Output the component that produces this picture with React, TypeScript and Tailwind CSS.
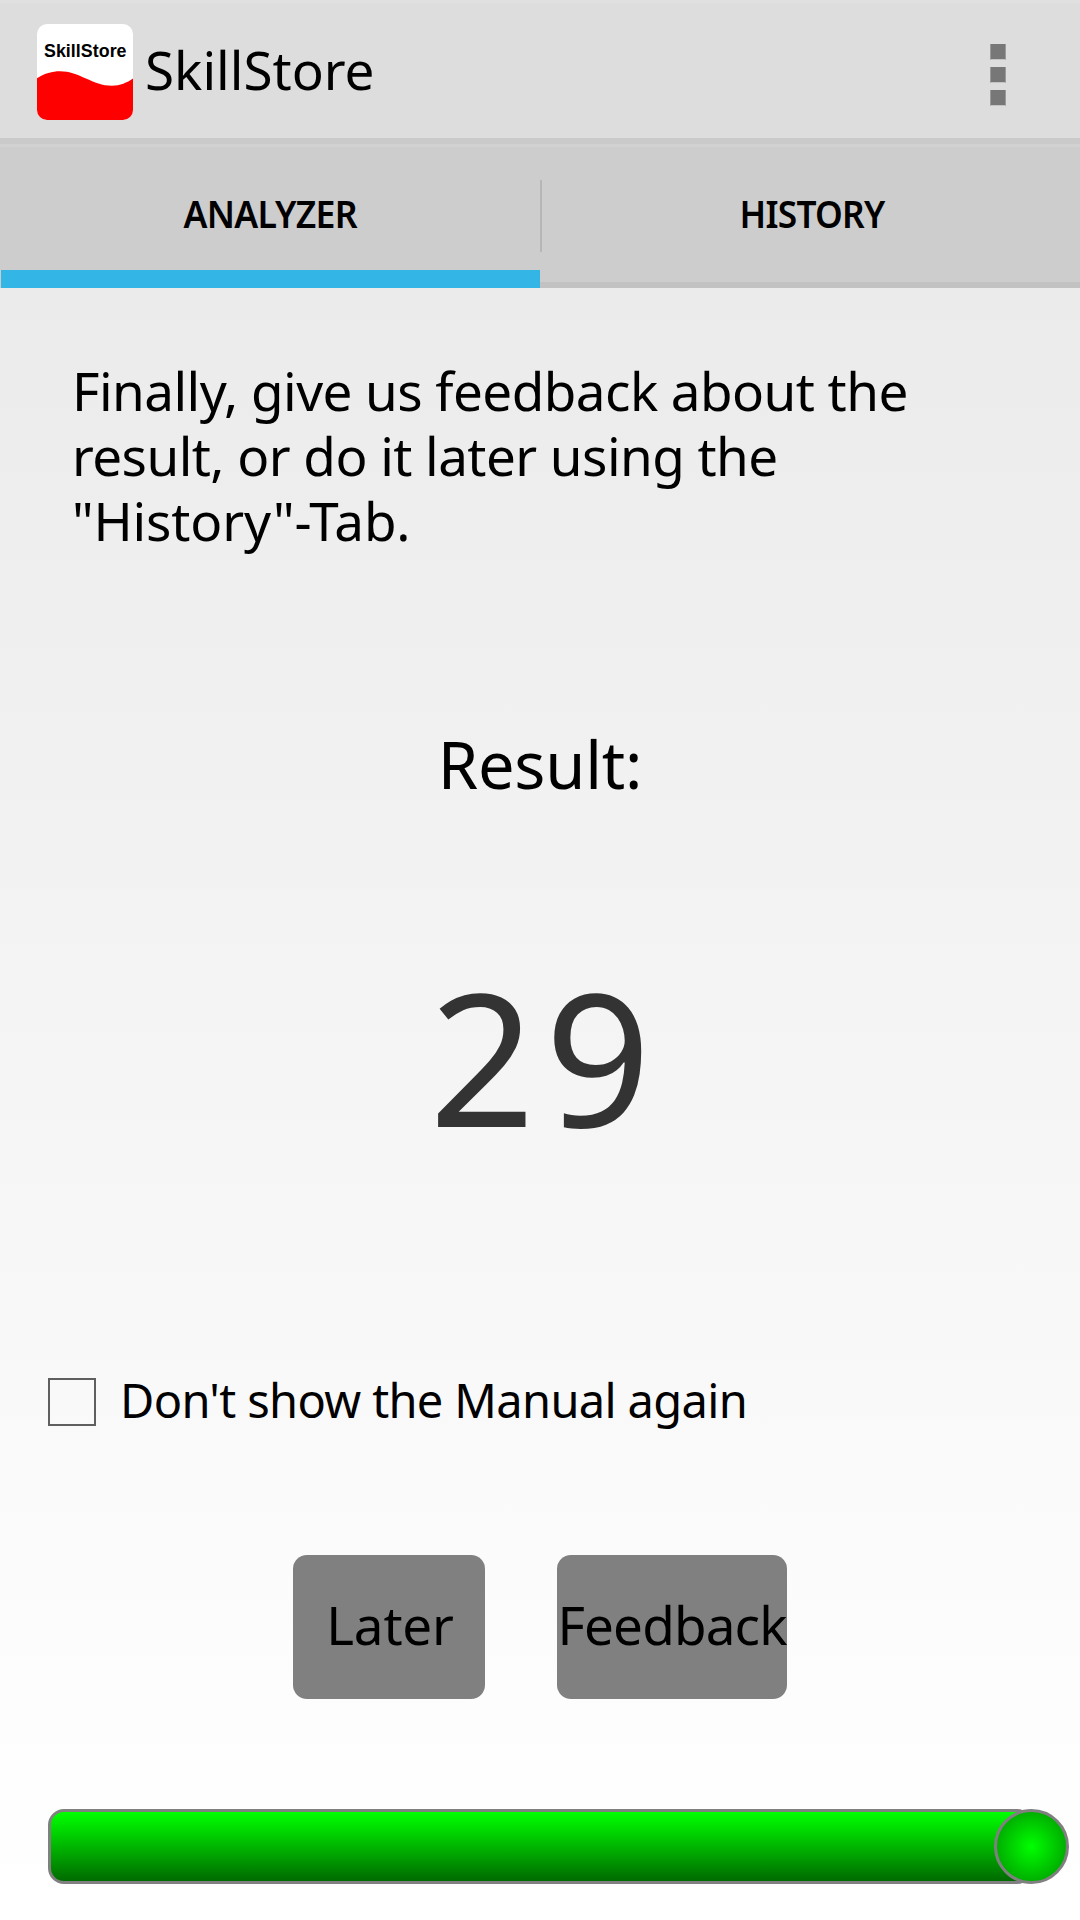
import React from "react";

function AppIcon() {
  return (
    <svg className="h-24 w-24 shrink-0" viewBox="0 0 96 96" aria-hidden="true">
      <defs>
        <clipPath id="icon-shape">
          <rect width="96" height="96" rx="10" />
        </clipPath>
      </defs>
      <g clipPath="url(#icon-shape)">
        <rect width="96" height="96" fill="#fff" />
        <path
          d="M0 54.3C8 49.3 15 47.3 23 47.3C42 47.3 56 61.8 75 61.8C83 61.8 90 58.8 96 54.6V96H0Z"
          fill="#f00"
        />
      </g>
      <text
        x="7"
        y="33"
        fontFamily="Liberation Sans, Arial, sans-serif"
        fontWeight="700"
        fontSize="17.8"
        textLength="82.5"
      >
        SkillStore
      </text>
    </svg>
  );
}

function Header() {
  return (
    <header className="flex h-[138px] items-center border-t-[3px] border-[#e0e0e0] bg-[#dddddd] pr-[74px] pl-[37px]">
      <div className="flex flex-1 items-center gap-3 pt-[3px]">
        <AppIcon />
        <h1 className="pb-[5px] text-[53px] leading-[72px]">SkillStore</h1>
      </div>
      <button className="flex flex-col gap-[7px] pt-[8px]" aria-label="Menu">
        {[0, 1, 2].map((i) => (
          <span
            key={i}
            className="block h-4 w-4 border-x border-b border-x-[#9a9a9a] border-b-[#c4c4c4] bg-[#777777]"
          />
        ))}
      </button>
    </header>
  );
}

function Tabs() {
  return (
    <nav className="flex h-[150px] flex-col bg-[#cdcdcd] text-[37.5px] font-semibold">
      <div className="h-[6px] bg-[#cacaca]" />
      <div className="h-[3px] bg-[#d2d2d2]" />
      <div className="flex flex-1">
        <div className="flex w-[540px] flex-col pl-px">
          <span className="flex flex-1 items-center justify-center pt-[11px]">
            <span className="scale-x-[0.95] leading-10 tracking-[-0.8px]">ANALYZER</span>
          </span>
          <span className="h-[18px] bg-[#33b5e5]" />
        </div>
        <div className="flex flex-1 flex-col border-b-[6px] border-[#c2c2c2]">
          <div className="flex flex-1 pt-[33px]">
            <span className="h-[72px] w-[2px] bg-[#b6b6b6]" />
            <span className="flex h-[67px] flex-1 items-center justify-center pl-[2px]">
              <span className="scale-x-[0.94] leading-10 tracking-[-0.8px]">HISTORY</span>
            </span>
          </div>
        </div>
      </div>
    </nav>
  );
}

export default function App() {
  return (
    <div className="flex h-[1920px] w-[1080px] flex-col overflow-hidden font-['Noto_Sans',sans-serif] text-black">
      <Header />
      <Tabs />
      <main className="flex flex-1 flex-col bg-[linear-gradient(to_bottom,#ebebeb,#fefefe_92%,#ffffff)]">
        <p className="mt-[70px] ml-[72px] text-[53px] leading-[65px] tracking-[-0.55px]">
          Finally, give us feedback about the
          <br />
          result, or do it later using the
          <br />
          <span className="tracking-[-0.15px]">"History"-Tab.</span>
        </p>
        <h2 className="mt-[171px] text-center text-[65px] leading-[80px] tracking-[-0.2px]">
          Result:
        </h2>
        <div className="mt-[141px] flex justify-center text-[185px] leading-[220px] tracking-[10px] text-[#333333]">
          <span className="-mr-[10px]">29</span>
        </div>
        <label className="mt-[213px] ml-12 flex h-12 items-center gap-6">
          <span className="h-12 w-12 border-2 border-[#5f5f5f]" />
          <span className="pb-[4px] text-[47px] leading-[66px] tracking-[-0.65px]">
            Don't show the Manual again
          </span>
        </label>
        <div className="mt-[129px] flex justify-center gap-[72px] text-[53px] leading-[72px]">
          <button className="flex h-36 w-48 items-center justify-center rounded-[14px] bg-[#808080] pb-[5px] pl-[2px] tracking-[-0.2px]">
            Later
          </button>
          <button className="flex h-36 w-[230px] items-center justify-center rounded-[14px] bg-[#808080] pb-[5px] tracking-[-0.85px]">
            Feedback
          </button>
        </div>
        <div className="mt-[110px] ml-12 flex">
          <div className="h-[75px] w-[985px] rounded-[16px] border-[3px] border-[#808080] bg-[linear-gradient(to_bottom,#00ff00_5%,#006400)] bg-origin-border" />
          <div className="-ml-[39px] h-[75px] w-[75px] rounded-full border-[3px] border-[#808080] bg-[radial-gradient(circle_at_center,#00ff00,#00a800_38px)]" />
        </div>
      </main>
    </div>
  );
}
